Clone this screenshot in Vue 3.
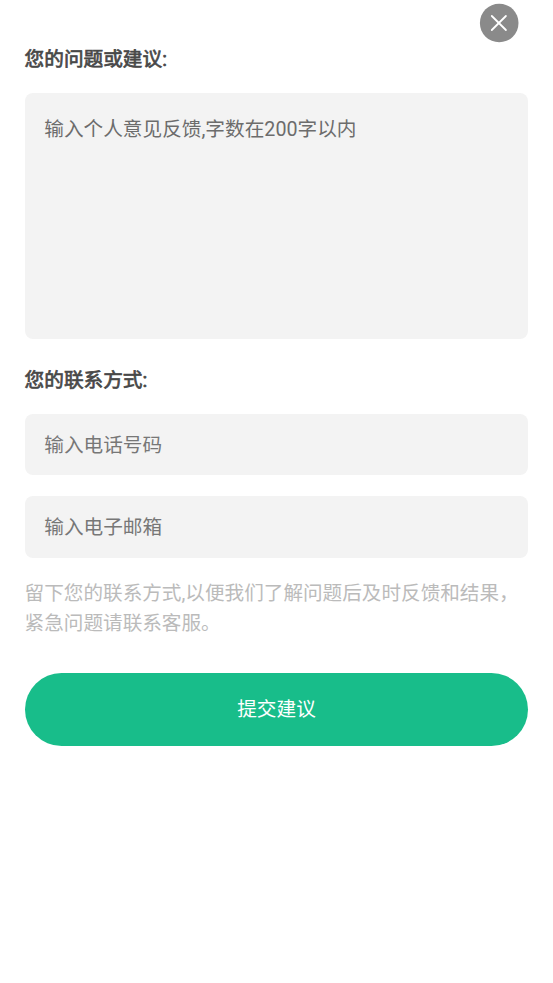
<script setup>
import { ref } from 'vue'

const suggestion = ref('')
const phone = ref('')
const email = ref('')
</script>

<template>
  <main class="page">
    <button class="close" type="button" aria-label="关闭">
      <svg viewBox="0 0 40 40" aria-hidden="true">
        <circle cx="20.2" cy="20" r="19.3" fill="#8a8a8a" />
        <path d="M12.8 13L26.9 27M26.9 13L12.8 27" stroke="#fff" stroke-width="1.8" stroke-linecap="round" />
      </svg>
    </button>
    <form class="form" @submit.prevent>
      <h2 class="title">您的问题或建议:</h2>
      <textarea v-model="suggestion" class="field area" maxlength="200" placeholder="输入个人意见反馈,字数在200字以内"></textarea>
      <h2 class="title contact">您的联系方式:</h2>
      <input v-model="phone" class="field line phone" type="tel" placeholder="输入电话号码" />
      <input v-model="email" class="field line email" type="text" placeholder="输入电子邮箱" />
      <p class="hint">留下您的联系方式,以便我们了解问题后及时反馈和结果，紧急问题请联系客服。</p>
      <button class="submit" type="submit">提交建议</button>
    </form>
  </main>
</template>

<style>
body {
  background: #fff;
}
</style>

<style scoped>
.page {
  position: relative;
  box-sizing: border-box;
  min-height: 983px;
  padding: 45.3px 24.6px 0;
  font: 19.66px/29.5px Roboto, "Noto Sans CJK SC", sans-serif;
}
.close {
  position: absolute;
  top: 3px;
  right: 34px;
  width: 40px;
  height: 40px;
  padding: 0;
  border: 0;
  background: none;
}
.close svg {
  display: block;
  width: 40px;
  height: 40px;
}
.form {
  display: flex;
  flex-direction: column;
}
.title {
  margin: 0;
  font: inherit;
  color: #484848;
  -webkit-text-stroke: 0.7px #484848;
}
.field {
  display: block;
  box-sizing: border-box;
  width: 100%;
  margin: 0;
  border: 0;
  border-radius: 8px;
  outline: 0;
  background: #f3f3f3;
  color: #333;
  font: inherit;
  resize: none;
}
.field::placeholder {
  color: #777;
  opacity: 1;
}
.area {
  height: 245.8px;
  margin-top: 18.4px;
  padding: 21.4px 19.66px;
}
.area::placeholder {
  color: #6c6c6c;
}
.contact {
  margin-top: 27px;
}
.line {
  height: 61.9px;
  padding: 1.6px 19.66px 0;
}
.phone {
  margin-top: 18.1px;
}
.email {
  margin-top: 20.3px;
}
.hint {
  margin: 21.5px 0 0;
  color: #bbb;
  font-size: 19.62px;
}
.submit {
  height: 73.3px;
  margin-top: 35px;
  padding: 0;
  border: 0;
  border-radius: 37px;
  background: #18bd8a;
  color: #fff;
  font: inherit;
}
</style>
